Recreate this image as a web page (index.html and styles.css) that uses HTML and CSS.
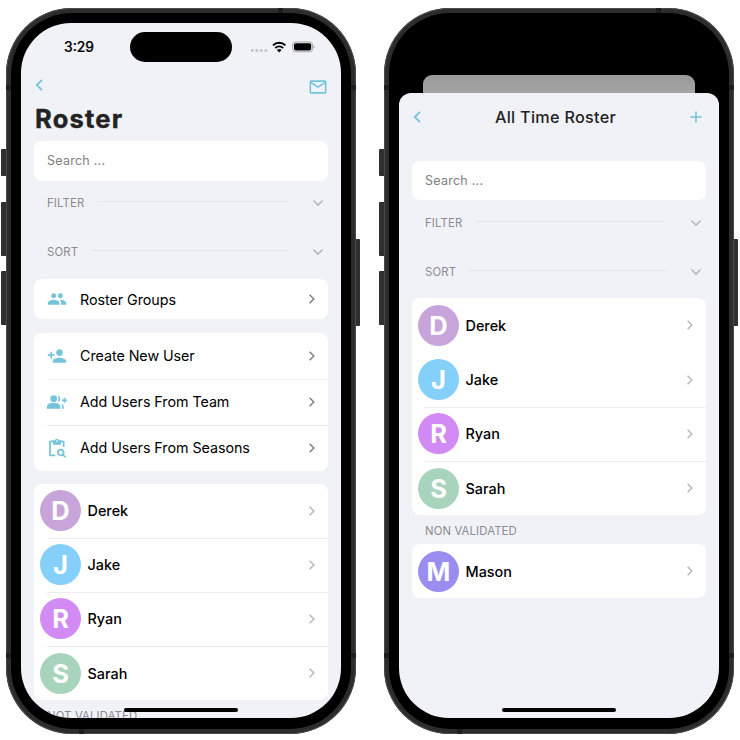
FILE: index.html
```
<!DOCTYPE html>
<html lang="en">
<head>
<meta charset="utf-8">
<title>Roster</title>
<link rel="stylesheet" href="styles.css">
</head>
<body>
<svg width="0" height="0" class="defs">
  <symbol id="chev" viewBox="0 0 8 12"><path d="M1.6 1.8 5.8 6 1.6 10.2" fill="none" stroke="currentColor" stroke-width="1.5"/></symbol>
  <symbol id="down" viewBox="0 0 12 8"><path d="M1.4 1.5 6 6.1 10.6 1.5" fill="none" stroke="currentColor" stroke-width="1.5"/></symbol>
  <symbol id="back" viewBox="0 0 8 12"><path d="M7 .8 1.8 6 7 11.2" fill="none" stroke="currentColor" stroke-width="1.9"/></symbol>
</svg>
<main class="stage">
  <section class="phone">
    <i class="key k1"></i><i class="key k2"></i><i class="key k3"></i><i class="key k4"></i>
    <i class="band b1"></i><i class="band b2"></i><i class="band b3"></i><i class="band b4"></i><i class="band b5"></i><i class="band b6"></i>
    <div class="bezel">
    <div class="screen">
      <header class="status">
        <span class="time">3:29</span>
        <span class="island"></span>
        <svg class="signals" width="66" height="14" viewBox="0 0 66 14">
          <g fill="#c3c3c8"><circle cx="2.3" cy="10.5" r="1.5"/><circle cx="6.8" cy="10.5" r="1.5"/><circle cx="11.3" cy="10.5" r="1.5"/><circle cx="15.8" cy="10.5" r="1.5"/></g>
          <g fill="none" stroke="#000" stroke-width="1.9"><path d="M23 5.3a8.8 8.8 0 0 1 12.4 0"/><path d="M25.3 8a5.6 5.6 0 0 1 7.8 0"/></g>
          <path d="M29.2 12.4 26.9 10a3.3 3.3 0 0 1 4.6 0z"/>
          <rect x="42.7" y="2" width="19.8" height="9.8" rx="3" fill="none" stroke="#a4a4a8"/>
          <rect x="44" y="3.3" width="17.2" height="7.2" rx="1.9"/>
          <path d="M63.6 5.2v3.4q1.1-.5 1.1-1.7t-1.1-1.7z" fill="#a4a4a8"/>
        </svg>
      </header>
      <nav class="nav">
        <svg class="back" width="8" height="12"><use href="#back"/></svg>
        <svg class="mail" width="18" height="14" viewBox="0 0 18 14" fill="none" stroke="currentColor" stroke-width="1.6"><rect x="1.3" y="1.1" width="15.4" height="11.8" rx=".8"/><path d="m1.6 2.4 7.4 4.7 7.4-4.7"/></svg>
      </nav>
      <h1 class="title">Roster</h1>
      <div class="search">Search ...</div>
      <div class="fold"><span>FILTER</span><hr><svg width="12" height="8"><use href="#down"/></svg></div>
      <div class="fold"><span>SORT</span><hr><svg width="12" height="8"><use href="#down"/></svg></div>
      <div class="card solo">
        <div class="action"><svg class="ico" viewBox="0 0 24 24"><path d="M16 11c1.66 0 2.99-1.34 2.99-3S17.66 5 16 5s-3 1.34-3 3 1.34 3 3 3zm-8 0c1.66 0 2.99-1.34 2.99-3S9.66 5 8 5 5 6.34 5 8s1.34 3 3 3zm0 2c-2.33 0-7 1.17-7 3.5V19h14v-2.5C15 14.17 10.33 13 8 13zm8 0c-.29 0-.62.02-.97.05 1.16.84 1.97 1.97 1.97 3.45V19h6v-2.5c0-2.33-4.67-3.5-7-3.5z"/></svg><span>Roster Groups</span><svg class="chev" width="8" height="12"><use href="#chev"/></svg></div>
      </div>
      <div class="card actions">
        <div class="action"><svg class="ico" viewBox="0 0 24 24"><path d="M15 12c2.21 0 4-1.79 4-4s-1.79-4-4-4-4 1.79-4 4 1.79 4 4 4zm-9-2V7H4v3H1v2h3v3h2v-3h3v-2H6zm9 4c-2.67 0-8 1.34-8 4v2h16v-2c0-2.66-5.33-4-8-4z"/></svg><span>Create New User</span><svg class="chev" width="8" height="12"><use href="#chev"/></svg></div>
        <div class="action"><svg class="ico" viewBox="0 0 24 24"><circle cx="8" cy="8" r="4"/><path d="M22 9V7h-2v2h-2v2h2v2h2v-2h2V9zM8 13c-2.67 0-8 1.34-8 4v3h16v-3c0-2.66-5.33-4-8-4zM12.51 4.05C13.43 5.11 14 6.49 14 8s-.57 2.89-1.49 3.95C14.47 11.7 16 10.04 16 8s-1.53-3.7-3.49-3.95zM16.53 13.83C17.42 14.66 18 15.7 18 17v3h2v-3c0-1.45-1.59-2.51-3.47-3.17z"/></svg><span>Add Users From Team</span><svg class="chev" width="8" height="12"><use href="#chev"/></svg></div>
        <div class="action"><svg class="ico" viewBox="0 0 24 24"><path d="M10 20.9H4.6q-1 0-1-1V4.9q0-1 1-1H19q1 0 1 1v6" fill="none" stroke="currentColor" stroke-width="2.1"/><path d="M7 3h2.2a3 3 0 0 1 5.4 0H17v5H7z"/><circle cx="11.9" cy="3.7" r="1" fill="#fff"/><circle cx="16.4" cy="17.3" r="3.5" fill="none" stroke="currentColor" stroke-width="2.1"/><path d="m19 19.9 3.2 3.2" stroke="currentColor" stroke-width="2.1"/></svg><span>Add Users From Seasons</span><svg class="chev" width="8" height="12"><use href="#chev"/></svg></div>
      </div>
      <div class="card people">
        <div class="person"><b class="av d">D</b><span>Derek</span><svg class="chev" width="8" height="12"><use href="#chev"/></svg></div>
        <div class="person"><b class="av j">J</b><span>Jake</span><svg class="chev" width="8" height="12"><use href="#chev"/></svg></div>
        <div class="person"><b class="av r">R</b><span>Ryan</span><svg class="chev" width="8" height="12"><use href="#chev"/></svg></div>
        <div class="person"><b class="av s">S</b><span>Sarah</span><svg class="chev" width="8" height="12"><use href="#chev"/></svg></div>
      </div>
      <h2 class="group">NOT VALIDATED</h2>
      <i class="home"></i>
    </div>
    </div>
  </section>

  <section class="phone">
    <i class="key k1"></i><i class="key k2"></i><i class="key k3"></i><i class="key k4"></i>
    <i class="band b1"></i><i class="band b2"></i><i class="band b3"></i><i class="band b4"></i><i class="band b5"></i><i class="band b6"></i>
    <div class="bezel">
    <div class="screen dark">
      <div class="behind"></div>
      <div class="sheet">
        <nav class="bar">
          <svg class="back" width="8" height="12"><use href="#back"/></svg>
          <h1>All Time Roster</h1>
          <svg class="plus" width="12" height="12" viewBox="0 0 12 12"><path d="M6 .4v11.2M.4 6h11.2" stroke="currentColor" stroke-width="1.6"/></svg>
        </nav>
        <div class="search">Search ...</div>
        <div class="fold"><span>FILTER</span><hr><svg width="12" height="8"><use href="#down"/></svg></div>
        <div class="fold"><span>SORT</span><hr><svg width="12" height="8"><use href="#down"/></svg></div>
        <div class="card people first-plain">
          <div class="person"><b class="av d">D</b><span>Derek</span><svg class="chev" width="8" height="12"><use href="#chev"/></svg></div>
          <div class="person"><b class="av j">J</b><span>Jake</span><svg class="chev" width="8" height="12"><use href="#chev"/></svg></div>
          <div class="person"><b class="av r">R</b><span>Ryan</span><svg class="chev" width="8" height="12"><use href="#chev"/></svg></div>
          <div class="person"><b class="av s">S</b><span>Sarah</span><svg class="chev" width="8" height="12"><use href="#chev"/></svg></div>
        </div>
        <h2 class="group">NON VALIDATED</h2>
        <div class="card people">
          <div class="person"><b class="av m">M</b><span>Mason</span><svg class="chev" width="8" height="12"><use href="#chev"/></svg></div>
        </div>
      </div>
      <i class="home"></i>
    </div>
    </div>
  </section>
</main>
</body>
</html>
```
FILE: styles.css
```
* { box-sizing: border-box; }
body { margin: 0; background: #fff; font-family: Inter, "Liberation Sans", sans-serif; color: #000; overflow: hidden; }
h1, h2 { margin: 0; font-weight: 400; }
svg { display: block; flex: none; }
.defs { position: absolute; }
.stage { display: flex; gap: 28px; width: 740px; height: 740px; padding: 7.5px 6px 0; }

.phone { position: relative; flex: none; width: 350px; height: 726px; border-radius: 66px; background: #2c2c2d; padding: 5px; box-shadow: inset 0 0 0 1px #4b4b4c; }
.bezel { height: 716px; padding: 10.5px 10px; border-radius: 61px; background: #000; }
.screen { position: relative; width: 320px; height: 695px; padding: 0 13px; border-radius: 50px; overflow: hidden; background: #f1f2f8; }
.screen.dark { background: #000; padding: 52px 0 0; }
.key { position: absolute; width: 5px; left: -5px; background: #303031; border-radius: 1px 0 0 1px; }
.k1 { top: 141.5px; height: 27px; }
.k2 { top: 194.5px; height: 54px; }
.k3 { top: 263.5px; height: 54px; }
.k4 { top: 231px; height: 87px; left: auto; right: -4px; width: 4px; border-radius: 0 1px 1px 0; }
.band { position: absolute; background: #1e1e1f; width: 5px; height: 5px; }
.b1 { left: 0; top: 77px; }
.b2 { right: 0; top: 77px; }
.b3 { left: 0; top: 645px; }
.b4 { right: 0; top: 645px; }
.b5 { right: 73px; top: 0; }
.b6 { left: 73px; bottom: 0; }

.status { display: flex; align-items: center; height: 48px; padding-left: 30px; }
.time { width: 66px; font-size: 13.8px; font-weight: 500; letter-spacing: 0; -webkit-text-stroke: .2px #000; }
.island { width: 102px; height: 30px; border-radius: 15px; background: #000; }
.signals { margin-left: 18px; }
.nav { display: flex; justify-content: space-between; height: 30px; padding: 8px 1px 0 1px; color: #75c4d9; }
.mail { margin-top: 1.2px; }
.title { height: 40px; font-size: 25.5px; line-height: 36px; font-weight: 700; letter-spacing: 1.2px; color: #222; padding-left: 1px; -webkit-text-stroke: .4px #222; }
.search { height: 39.5px; border-radius: 8px; background: #fff; padding-left: 13px; font-size: 12.5px; line-height: 39px; letter-spacing: .25px; color: #808083; }
.fold { display: flex; align-items: center; height: 49px; padding: 0 4px 0 13px; font-size: 11.3px; letter-spacing: .2px; color: #8a8a8f; }
.search + .fold { height: 45.5px; }
.fold + .fold { height: 52.5px; }
.fold hr { flex: 1; height: 1px; margin: 0 24px 3px 13px; border: 0; background: #e4e4e9; }
.fold svg { color: #b5b5b9; }
.card { background: #fff; border-radius: 8px; overflow: hidden; }
.solo { height: 40.5px; }
.actions { margin-top: 13.5px; }
.action { position: relative; display: flex; align-items: center; height: 46px; padding: 0 12px 0 13px; font-size: 14.3px; letter-spacing: -.05px; }
.solo .action { height: 41px; }
.ico { width: 20px; height: 20px; margin-right: 13px; fill: #75c4d9; color: #75c4d9; }
.chev { margin-left: auto; color: #808084; }
.action + .action::before, .person + .person::before { content: ""; position: absolute; top: 0; left: 13px; right: 0; height: 1px; background: #ededf0; }
.actions + .people { margin-top: 13px; }
.person { position: relative; display: flex; align-items: center; height: 54.2px; padding: 0 12px 0 6px; font-size: 14.4px; font-weight: 500; }
.person .chev { color: #b9b9bc; }
.av { width: 41px; height: 41px; margin-right: 6.5px; border-radius: 50%; color: #fff; font-size: 25.5px; line-height: 41px; font-weight: 700; text-align: center; }
.d { background: #c7a5db; }
.j { background: #85cffb; }
.r { background: #d28af4; }
.s { background: #a9d4bc; }
.m { background: #998ef0; }
.group { padding-left: 13px; height: 29px; font-size: 11.3px; line-height: 32px; letter-spacing: .15px; color: #8a8a8f; }
.home { position: absolute; left: 103px; top: 684.5px; width: 114px; height: 4px; border-radius: 2px; background: #000; }

.behind { width: 272px; height: 17.5px; margin: 0 auto; border-radius: 9px 9px 0 0; background: linear-gradient(#999, #a5a5a5); }
.sheet { height: 626px; padding: 0 13px; border-radius: 12px 12px 0 0; background: #f1f2f8; }
.bar { display: flex; justify-content: space-between; align-items: center; height: 68.4px; padding: 0 4px 19px 1px; color: #75c4d9; }
.bar h1 { font-size: 16.2px; font-weight: 500; letter-spacing: .3px; color: #222; }
.first-plain .person:nth-child(2)::before { display: none; }
```
